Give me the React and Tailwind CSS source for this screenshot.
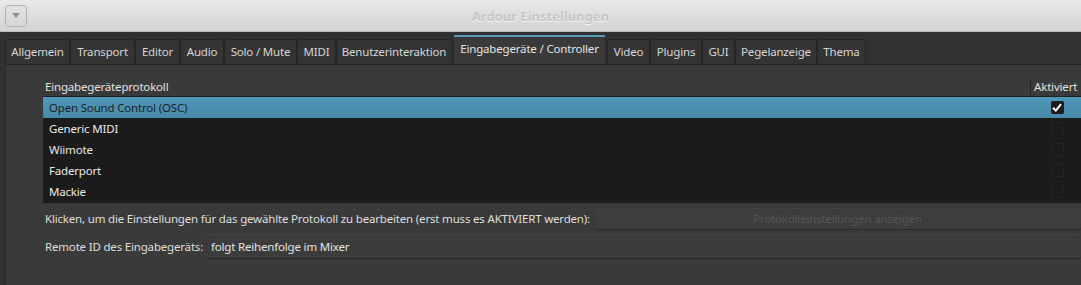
import React from "react";

const tabs = [
  { label: "Allgemein", w: "w-[65px]" },
  { label: "Transport", w: "w-[65px]" },
  { label: "Editor", w: "w-[45px]" },
  { label: "Audio", w: "w-[44px]" },
  { label: "Solo / Mute", w: "w-[73px]" },
  { label: "MIDI", w: "w-[39px]" },
  { label: "Benutzerinteraktion", w: "w-[116px]" },
  { label: "Eingabegeräte / Controller", w: "w-[153px]", active: true },
  { label: "Video", w: "w-[43px]" },
  { label: "Plugins", w: "w-[52px]" },
  { label: "GUI", w: "w-[33px]" },
  { label: "Pegelanzeige", w: "w-[82px]" },
  { label: "Thema", w: "w-[49px]" },
];

const protocols = [
  { name: "Open Sound Control (OSC)", on: true },
  { name: "Generic MIDI" },
  { name: "Wiimote" },
  { name: "Faderport" },
  { name: "Mackie" },
];

function Tab({ tab }) {
  if (tab.active) {
    return (
      <div
        className={`${tab.w} mx-[1px] h-[29px] flex items-center justify-center rounded-t-[3px] border-t-2 border-x border-t-[#5a9ab8] border-x-[#262626] bg-[#3a3a3a] text-[#e4e4e4] pb-[4px]`}
      >
        {tab.label}
      </div>
    );
  }
  return (
    <div
      className={`${tab.w} h-[25px] flex items-center justify-center rounded-t-[3px] border border-b-0 border-[#262626] bg-[#343434] text-[#d6d6d6]`}
    >
      {tab.label}
    </div>
  );
}

export default function App() {
  return (
    <div
      className="w-[1081px] h-[285px] overflow-hidden bg-[#313131] text-[11.5px] tracking-[-0.18px] leading-none whitespace-nowrap"
      style={{ fontFamily: '"Noto Sans", "Open Sans", sans-serif' }}
    >
      {/* title bar */}
      <div className="relative h-[32px] flex items-center bg-gradient-to-b from-[#e9e9e9] to-[#d3d3d3] border-b border-[#bdbdbd]">
        <div className="ml-[5px] w-[22px] h-[22px] rounded-[3px] border border-[#b4b4b4] bg-gradient-to-b from-[#e2e2e2] to-[#d6d6d6] flex items-center justify-center">
          <svg width="8" height="5" viewBox="0 0 8 5">
            <path d="M0 0 L8 0 L4 5 Z" fill="#8f8f8f" />
          </svg>
        </div>
        <div
          className="absolute inset-0 pt-[1px] flex items-center justify-center font-bold text-[13px] tracking-normal text-[#c6c6c6]"
          style={{ textShadow: "0 1px 0 #f4f4f4" }}
        >
          Ardour Einstellungen
        </div>
      </div>

      {/* tab strip */}
      <div className="flex items-end h-[32px] pl-[5px]">
        {tabs.map((t) => (
          <Tab key={t.label} tab={t} />
        ))}
      </div>

      {/* page */}
      <div className="ml-[5px] h-[221px] bg-[#3a3a3a] border-t border-l border-[#262626] pt-[12px] pl-[37px]">
        {/* list header */}
        <div className="flex h-[20px] items-center text-[#e2e2e2] border-b border-[#232323]">
          <div className="flex-1 pl-[2px]">Eingabegeräteprotokoll</div>
          <div className="w-[51px] h-[16px] border-l border-[#262626] pl-[3px] flex items-center">
            Aktiviert
          </div>
        </div>

        {/* list */}
        <div className="bg-[#1b1b1b] h-[106px]">
          {protocols.map((p) => (
            <div
              key={p.name}
              className={`flex items-center h-[21px] ${
                p.on ? "bg-gradient-to-b from-[#4f97b9] to-[#4789a8] text-[#1e1e1e]" : "text-[#e8e8e8]"
              }`}
            >
              <div className="flex-1 pl-[6px]">{p.name}</div>
              <div className="w-[51px] flex justify-center pl-[3px]">
                {p.on ? (
                  <div className="w-[13px] h-[13px] rounded-[2px] bg-[#1c1c1c] flex items-center justify-center">
                    <svg width="10" height="9" viewBox="0 0 10 9">
                      <path d="M1 4.8 L3.8 7.6 L9 1.2" fill="none" stroke="#ffffff" strokeWidth="2" />
                    </svg>
                  </div>
                ) : (
                  <div className="w-[13px] h-[13px] rounded-[2px] border border-[#242424]" />
                )}
              </div>
            </div>
          ))}
        </div>

        {/* edit settings row */}
        <div className="flex items-center mt-[5px] h-[22px]">
          <div className="pl-[2px] w-[551px] text-[#dedede]">
            Klicken, um die Einstellungen für das gewählte Protokoll zu bearbeiten (erst muss es AKTIVIERT werden):
          </div>
          <div className="flex-1 h-[22px] rounded-[3px] bg-[#3d3d3d] border-b border-[#2a2a2a] border-t border-t-[#424242] flex items-center justify-center text-[#555555]">
            Protokolleinstellungen anzeigen
          </div>
        </div>

        {/* remote id row */}
        <div className="flex items-center mt-[4px] h-[25px]">
          <div className="pl-[2px] w-[164px] text-[#dedede]">Remote ID des Eingabegeräts:</div>
          <div className="flex-1 h-[25px] rounded-[3px] bg-[#3c3c3c] border-b border-[#262626] border-t border-t-[#444444] flex items-center pl-[4px] text-[#e4e4e4]">
            folgt Reihenfolge im Mixer
          </div>
        </div>
      </div>
    </div>
  );
}
